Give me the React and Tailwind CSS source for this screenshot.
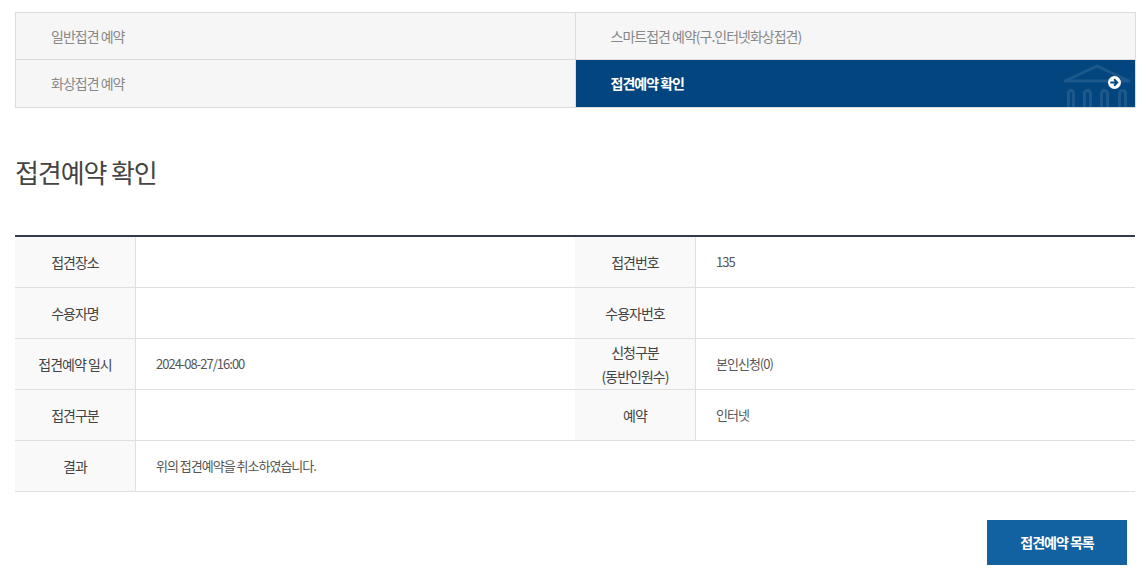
const font = "font-['Noto_Sans_CJK_KR','Noto_Sans_KR',sans-serif]"

const Th = ({ children }) => (
    <div className="w-[121px] shrink-0 flex items-center justify-center text-center bg-[#f9f9f9] border-r border-[#e0e0e0] text-[14px] leading-[24px] tracking-[-1px] text-[#444]">
        <div>{children}</div>
    </div>
)

const Td = ({ children }) => (
    <div className="flex-1 flex items-center pl-5 text-[13px] tracking-[-1px] text-[#555]">{children}</div>
)

const Row = ({ children }) => (
    <div className="flex h-[51px] border-b border-[#e0e0e0]">{children}</div>
)

const BankIcon = () => (
    <svg className="absolute right-0 bottom-0" width="74" height="44" viewBox="0 0 74 44" fill="none" stroke="#fff" strokeOpacity="0.1" strokeWidth="3">
        <path d="M4 18 L36 3 L68 18 Z" strokeLinejoin="round" />
        <path d="M7.5 44 V31 Q7.5 27.5 10 27.5 Q12.5 27.5 12.5 31 V44" />
        <path d="M23.5 44 V31 Q23.5 27.5 26.5 27.5 Q29.5 27.5 29.5 31 V44" />
        <path d="M40.5 44 V31 Q40.5 27.5 43.5 27.5 Q46.5 27.5 46.5 31 V44" />
        <path d="M58.5 44 V31 Q58.5 27.5 61.5 27.5 Q64.5 27.5 64.5 31 V44" />
    </svg>
)

const ArrowIcon = () => (
    <svg className="absolute right-[14px] top-[16px]" width="13" height="13" viewBox="0 0 14 14">
        <circle cx="7" cy="7" r="7" fill="#fff" />
        <path d="M2.5 7 H9.5 M6.5 3.5 L10 7 L6.5 10.5" fill="none" stroke="#03467f" strokeWidth="2" />
    </svg>
)

const App = () => {
    return (
        <div className={`${font} w-[1147px] h-[576px] bg-white overflow-hidden pt-3 pl-[15px]`}>
            <div className="w-[1121px] border border-[#dcdcdc] grid grid-cols-2 text-[14px] tracking-[-1px] text-[#888]">
                <div className="h-[47px] flex items-center pl-[35px] bg-[#f6f6f6] border-r border-b border-[#dcdcdc]">일반접견 예약</div>
                <div className="h-[47px] flex items-center pl-[35px] bg-[#f6f6f6] border-b border-[#dcdcdc]">스마트접견 예약(구.인터넷화상접견)</div>
                <div className="h-[47px] flex items-center pl-[35px] bg-[#f6f6f6] border-r border-[#dcdcdc]">화상접견 예약</div>
                <div className="relative h-[47px] flex items-center pl-[35px] bg-[#03467f] text-white font-bold overflow-hidden">
                    접견예약 확인
                    <BankIcon />
                    <ArrowIcon />
                </div>
            </div>

            <h2 className="mt-[43px] h-[84px] text-[26px] leading-[42px] tracking-[-1.1px] text-[#444]">접견예약 확인</h2>

            <div className="w-[1120px] border-t-2 border-[#343a46]">
                <Row>
                    <Th>접견장소</Th><Td />
                    <Th>접견번호</Th><Td>135</Td>
                </Row>
                <Row>
                    <Th>수용자명</Th><Td />
                    <Th>수용자번호</Th><Td />
                </Row>
                <Row>
                    <Th>접견예약 일시</Th><Td>2024-08-27/16:00</Td>
                    <Th>신청구분<br />(동반인원수)</Th><Td>본인신청(0)</Td>
                </Row>
                <Row>
                    <Th>접견구분</Th><Td />
                    <Th>예약</Th><Td>인터넷</Td>
                </Row>
                <Row>
                    <Th>결과</Th><Td>위의 접견예약을 취소하였습니다.</Td>
                </Row>
            </div>

            <div className="w-[1112px] flex justify-end mt-7">
                <button className="w-[140px] h-[45px] bg-[#1261a0] text-white text-[14px] font-bold tracking-[-1px]">접견예약 목록</button>
            </div>
        </div>
    )
}

export default App
